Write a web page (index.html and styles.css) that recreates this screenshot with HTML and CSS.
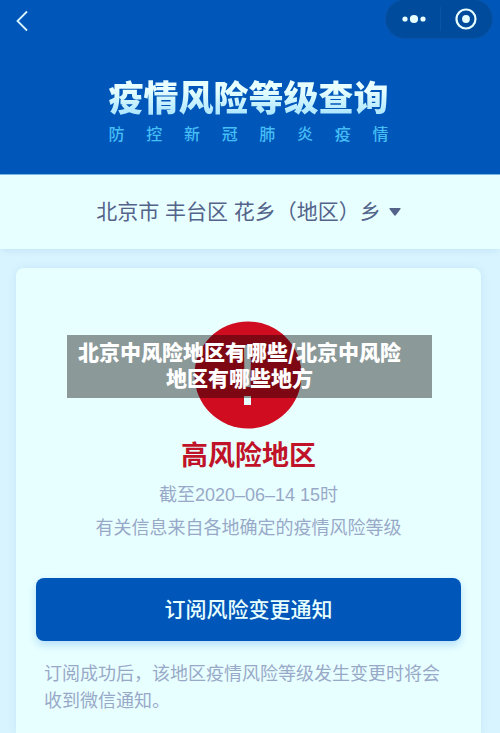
FILE: index.html
```html
<!DOCTYPE html>
<html lang="zh-CN">
<head>
<meta charset="utf-8">
<meta name="viewport" content="width=device-width, initial-scale=1">
<title>疫情风险等级查询</title>
<link rel="stylesheet" href="styles.css">
</head>
<body>
<header class="hero">
  <nav class="topbar">
    <button class="icon-button back" type="button" aria-label="返回">
      <svg width="12" height="22" viewBox="0 0 12 22"><path d="M11 1.500 1.500 11 11 20.500" fill="none" stroke="currentColor" stroke-width="1.8"/></svg>
    </button>
    <div class="capsule">
      <button class="icon-button" type="button" aria-label="更多">
        <svg width="24" height="24" viewBox="0 0 24 24" fill="currentColor"><circle cx="3" cy="12" r="2.6"/><circle cx="12" cy="12" r="4.1"/><circle cx="21" cy="12" r="2.6"/></svg>
      </button>
      <span class="divider"></span>
      <button class="icon-button" type="button" aria-label="关闭">
        <svg width="24" height="24" viewBox="0 0 24 24"><circle cx="12" cy="12" r="9.500" fill="none" stroke="currentColor" stroke-width="2.2"/><circle cx="12" cy="12" r="3.9" fill="currentColor"/></svg>
      </button>
    </div>
  </nav>
  <div class="heading">
    <h1>疫情风险等级查询</h1>
    <p>防 控 新 冠 肺 炎 疫 情</p>
  </div>
</header>
<button class="location" type="button">
  <span>北京市 丰台区 花乡（地区）乡</span>
  <svg width="12" height="8" viewBox="0 0 12 8"><path d="M1 0h10q1 0 .5 1L7 7Q6 8.400 5 7L.5 1Q0 0 1 0z" fill="currentColor"/></svg>
</button>
<main class="content">
  <section class="card">
    <div class="status">
      <svg class="alert" width="108" height="108" viewBox="0 0 108 108" role="img" aria-label="高风险"><circle cx="53" cy="54" r="53.500" fill="#d00c20"/><path d="M49 24h7l-.5 42h-6zM49 75h7v9h-7z" fill="#e8ffff"/></svg>
      <div class="caption">北京中风险地区有哪些/北京中风险地区有哪些地方</div>
    </div>
    <h2>高风险地区</h2>
    <p class="meta">截至2020–06–14 15时</p>
    <p class="meta">有关信息来自各地确定的疫情风险等级</p>
    <button class="subscribe" type="button">订阅风险变更通知</button>
    <p class="note">订阅成功后，该地区疫情风险等级发生变更时将会收到微信通知。</p>
  </section>
</main>
</body>
</html>
```
FILE: styles.css
```css
* {
  box-sizing: border-box;
}

body {
  margin: 0;
  min-height: 100vh;
  display: flex;
  flex-direction: column;
  background: #d8f4ff;
  color: #53638a;
  font-family: "Liberation Sans", "Noto Sans CJK SC", sans-serif;
}

h1, h2, p {
  margin: 0;
}

button {
  margin: 0;
  padding: 0;
  border: 0;
  font: inherit;
  color: inherit;
  background: none;
  cursor: pointer;
}

svg {
  display: block;
  overflow: visible;
}

.hero {
  padding-bottom: 27px;
  background: #0057b9;
  color: #e8ffff;
}

.topbar {
  display: flex;
  justify-content: space-between;
  align-items: flex-start;
  padding: 0 8px 0 16px;
}

.icon-button {
  display: flex;
}

.back {
  padding-top: 10px;
  color: #d8f4ff;
}

.capsule {
  display: flex;
  align-items: center;
  justify-content: space-between;
  width: 106px;
  height: 38px;
  padding: 0 14px 0 16px;
  border-radius: 19px;
  background: #004b9c;
  box-shadow: 0 0 0 1px #0753a8;
}

.divider {
  width: 1px;
  height: 24px;
  background: #0a55a8;
}

.heading {
  display: grid;
  justify-content: center;
  margin-top: 37px;
  padding: 0 19px 0 16px;
}

h1 {
  font-size: 35px;
  line-height: 48px;
  font-weight: 900;
  background: linear-gradient(#e8ffff 30%, #a9e4ff 85%);
  background-clip: text;
  color: transparent;
}

.heading p {
  font-size: 16px;
  line-height: 24px;
  color: #45bdf6;
  font-weight: 500;
  text-align-last: justify;
}

.location {
  display: flex;
  align-items: center;
  justify-content: center;
  gap: 8px;
  padding: 21px 19px 22px 16px;
  border-top: 1px solid #78b5e5;
  background: #e8ffff;
  box-shadow: 0 4px 6px -2px #c4e4f6;
  font-size: 21px;
  line-height: 31px;
  font-weight: 400;
}

.content {
  flex: 1;
  display: flex;
  padding: 19px 19px 0 16px;
}

.card {
  flex: 1;
  padding: 53px 20px 16px;
  border-radius: 8px 8px 0 0;
  background: #e8ffff;
  box-shadow: 0 0 8px #c4e4f6;
  text-align: center;
}

.status {
  position: relative;
}

.alert {
  margin: 0 auto;
}

.caption {
  position: absolute;
  top: 14px;
  left: 31px;
  right: 29px;
  padding: 3px 28px 8px 8px;
  background: rgba(0, 0, 0, 0.4);
  color: #fff;
  font-family: "Noto Sans CJK SC", sans-serif;
  font-size: 21px;
  line-height: 26px;
  font-weight: 900;
}

h2 {
  margin-top: 7px;
  color: #c01228;
  font-size: 27px;
  line-height: 40px;
  font-weight: 700;
}

.meta {
  margin-top: 6px;
  color: #98a9c8;
  font-size: 18px;
  line-height: 27px;
  font-weight: 400;
}

.subscribe {
  display: block;
  width: 100%;
  margin-top: 36px;
  padding: 16px 0;
  border-radius: 8px;
  background: #0057b9;
  box-shadow: 0 4px 10px #b4defa;
  color: #e8ffff;
  font-size: 21px;
  line-height: 31px;
  font-weight: 500;
}

.note {
  margin-top: 20px;
  padding: 0 8px;
  color: #98a9c8;
  font-size: 18px;
  line-height: 27px;
  font-weight: 400;
  text-align: left;
}
```
